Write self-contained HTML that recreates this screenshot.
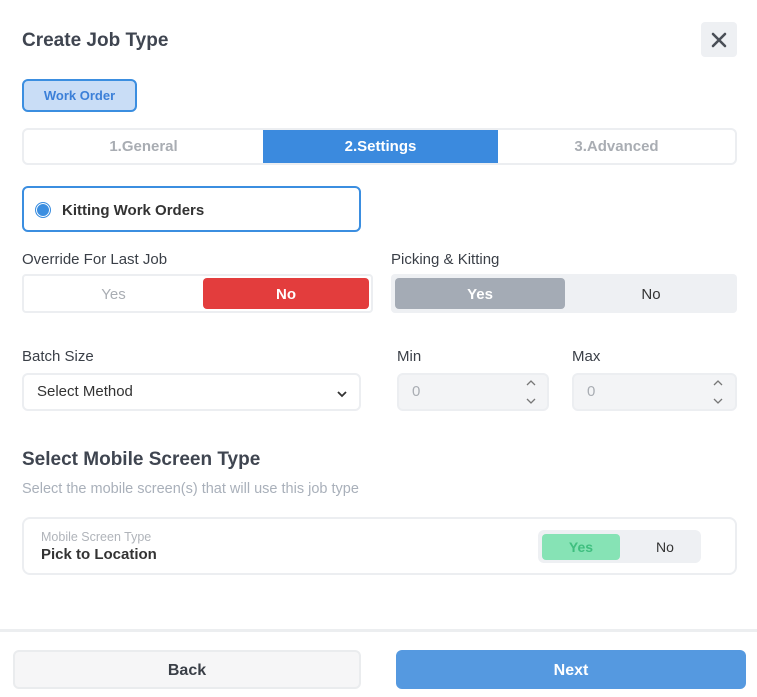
<!DOCTYPE html>
<html><head><style>
*{box-sizing:border-box;margin:0;padding:0}
body{width:757px;height:697px;background:#fff;font-family:"Liberation Sans",sans-serif;position:relative;overflow:hidden;color:#3a3f47}
.a{position:absolute}
.c{display:flex;align-items:center;justify-content:center}
</style></head><body>
<div class="a" style="left:22px;top:30px;font-size:19px;font-weight:bold;color:#3f4550">Create Job Type</div>
<div class="a c" style="left:701px;top:22px;width:36px;height:35px;background:#eef0f3;border-radius:4px">
<svg width="16" height="16" viewBox="0 0 16 16"><path d="M2 2L14 14M14 2L2 14" stroke="#4a4f57" stroke-width="2.6" stroke-linecap="round"/></svg></div>
<div class="a c" style="left:22px;top:79px;width:115px;height:33px;background:#c9ddf6;border:2px solid #3b8ee0;border-radius:6px;font-size:13px;font-weight:bold;color:#3b7fd8">Work Order</div>
<div class="a" style="left:22px;top:128px;width:715px;height:37px;border:2px solid #eceef1;border-radius:6px"></div>
<div class="a c" style="left:24px;top:130px;width:239px;height:33px;font-size:15px;font-weight:bold;color:#a9adb3">1.General</div>
<div class="a c" style="left:263px;top:130px;width:235px;height:33px;background:#3b8ade;font-size:15px;font-weight:bold;color:#fff">2.Settings</div>
<div class="a c" style="left:498px;top:130px;width:237px;height:33px;font-size:15px;font-weight:bold;color:#a9adb3">3.Advanced</div>
<div class="a" style="left:22px;top:186px;width:339px;height:46px;border:2px solid #3b8ee0;border-radius:6px"></div>
<div class="a" style="left:35px;top:202px;width:16px;height:16px;border-radius:50%;background:#3b8ee0;box-shadow:inset 0 0 0 1px #fff;border:1px solid #3b8ee0"></div>
<div class="a" style="left:62px;top:202px;font-size:15px;font-weight:bold;color:#333">Kitting Work Orders</div>
<div class="a" style="left:22px;top:251px;font-size:15px;color:#3a3f47">Override For Last Job</div>
<div class="a" style="left:391px;top:251px;font-size:15px;color:#3a3f47">Picking &amp; Kitting</div>
<div class="a" style="left:22px;top:274px;width:351px;height:39px;border:2px solid #eceef1;border-radius:4px"></div>
<div class="a c" style="left:24px;top:279px;width:179px;height:31px;font-size:15px;color:#a9adb3">Yes</div>
<div class="a c" style="left:203px;top:278px;width:166px;height:31px;background:#e33d3d;border-radius:4px;font-size:15px;font-weight:bold;color:#fff;padding-top:1px">No</div>
<div class="a" style="left:391px;top:274px;width:346px;height:39px;background:#eef0f3;border-radius:4px"></div>
<div class="a c" style="left:395px;top:278px;width:170px;height:31px;background:#a4abb5;border-radius:4px;font-size:15px;font-weight:bold;color:#fff;padding-top:1px">Yes</div>
<div class="a c" style="left:565px;top:279px;width:172px;height:31px;font-size:15px;color:#333">No</div>
<div class="a" style="left:22px;top:348px;font-size:15px">Batch Size</div>
<div class="a" style="left:397px;top:348px;font-size:15px">Min</div>
<div class="a" style="left:572px;top:348px;font-size:15px">Max</div>
<div class="a" style="left:22px;top:373px;width:339px;height:38px;border:2px solid #eceef1;border-radius:6px"></div>
<div class="a" style="left:37px;top:383px;font-size:15px;color:#333">Select Method</div>
<svg class="a" style="left:336px;top:389px" width="12" height="10" viewBox="0 0 12 10"><path d="M2 3L6 7L10 3" stroke="#333" stroke-width="1.8" fill="none"/></svg>
<div class="a" style="left:397px;top:373px;width:152px;height:38px;background:#f3f4f6;border:2px solid #eceef1;border-radius:6px"></div>
<div class="a" style="left:412px;top:383px;font-size:15px;color:#a9adb3">0</div>
<svg class="a" style="left:525px;top:377px" width="12" height="30" viewBox="0 0 12 30"><path d="M2 8L6 4L10 8M2 22L6 26L10 22" stroke="#777" stroke-width="1.3" fill="none"/></svg>
<div class="a" style="left:572px;top:373px;width:165px;height:38px;background:#f3f4f6;border:2px solid #eceef1;border-radius:6px"></div>
<div class="a" style="left:587px;top:383px;font-size:15px;color:#a9adb3">0</div>
<svg class="a" style="left:712px;top:377px" width="12" height="30" viewBox="0 0 12 30"><path d="M2 8L6 4L10 8M2 22L6 26L10 22" stroke="#777" stroke-width="1.3" fill="none"/></svg>
<div class="a" style="left:22px;top:449px;font-size:19px;font-weight:bold;color:#3f4550">Select Mobile Screen Type</div>
<div class="a" style="left:22px;top:481px;font-size:14.5px;color:#a9b0ba">Select the mobile screen(s) that will use this job type</div>
<div class="a" style="left:22px;top:517px;width:715px;height:58px;border:2px solid #eceef1;border-radius:8px"></div>
<div class="a" style="left:41px;top:530px;font-size:12.5px;color:#b0b4ba">Mobile Screen Type</div>
<div class="a" style="left:41px;top:546px;font-size:15px;font-weight:bold;color:#333">Pick to Location</div>
<div class="a" style="left:538px;top:530px;width:163px;height:33px;background:#eef0f3;border-radius:6px"></div>
<div class="a c" style="left:542px;top:534px;width:78px;height:26px;background:#86e3b5;border-radius:4px;font-size:14px;font-weight:bold;color:#3fbf7f">Yes</div>
<div class="a c" style="left:630px;top:534px;width:70px;height:26px;font-size:14px;color:#333">No</div>
<div class="a" style="left:0;top:629px;width:757px;height:3px;background:#eceef0"></div>
<div class="a c" style="left:13px;top:650px;width:348px;height:39px;background:#f6f6f7;border:2px solid #eaecee;border-radius:6px;font-size:16px;font-weight:bold;color:#3a3f47;padding-top:2px">Back</div>
<div class="a c" style="left:396px;top:650px;width:350px;height:39px;background:#5599e0;border-radius:6px;font-size:16px;font-weight:bold;color:#fff;padding-top:2px">Next</div>
</body></html>
